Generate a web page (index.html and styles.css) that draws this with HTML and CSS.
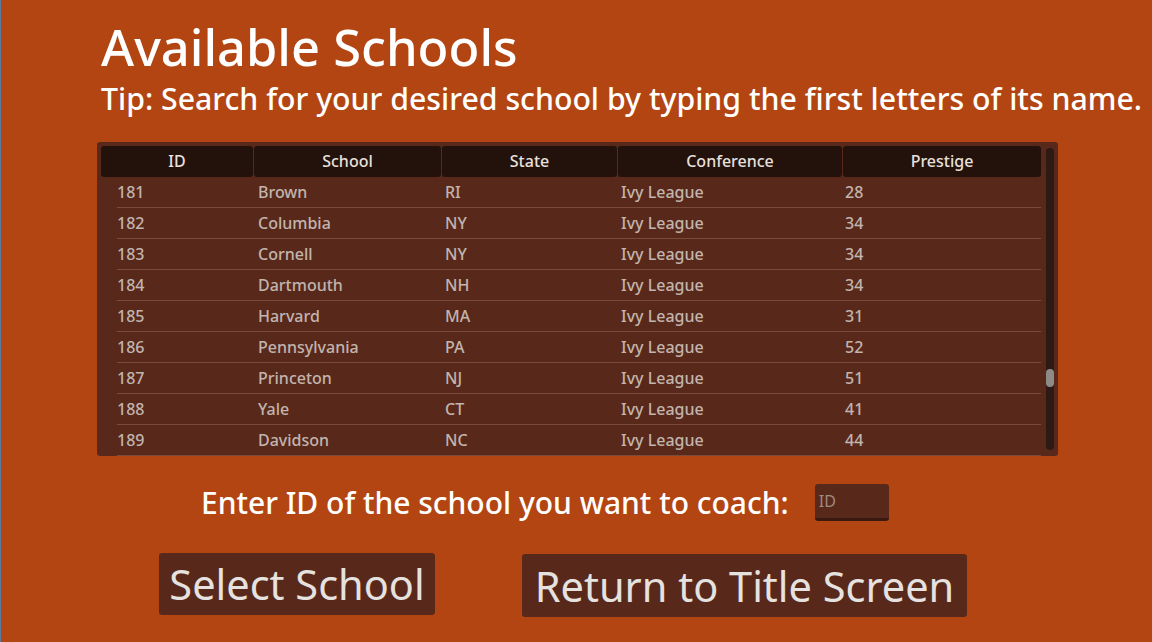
FILE: index.html
```html
<!DOCTYPE html>
<html lang="en">
<head>
    <meta charset="UTF-8">
    <title>Available Schools</title>
    <link rel="stylesheet" href="styles.css">
</head>
<body>
    <div class="screen">
        <h1 class="title">Available Schools</h1>
        <p class="tip">Tip: Search for your desired school by typing the first letters of its name.</p>

        <!-- Schools table -->
        <div class="panel">
            <div class="table">
                <div class="head">
                    <div class="hcell">ID</div>
                    <div class="hcell">School</div>
                    <div class="hcell">State</div>
                    <div class="hcell">Conference</div>
                    <div class="hcell">Prestige</div>
                </div>
                <div class="row"><span>181</span><span>Brown</span><span>RI</span><span>Ivy League</span><span>28</span></div>
                <div class="row"><span>182</span><span>Columbia</span><span>NY</span><span>Ivy League</span><span>34</span></div>
                <div class="row"><span>183</span><span>Cornell</span><span>NY</span><span>Ivy League</span><span>34</span></div>
                <div class="row"><span>184</span><span>Dartmouth</span><span>NH</span><span>Ivy League</span><span>34</span></div>
                <div class="row"><span>185</span><span>Harvard</span><span>MA</span><span>Ivy League</span><span>31</span></div>
                <div class="row"><span>186</span><span>Pennsylvania</span><span>PA</span><span>Ivy League</span><span>52</span></div>
                <div class="row"><span>187</span><span>Princeton</span><span>NJ</span><span>Ivy League</span><span>51</span></div>
                <div class="row"><span>188</span><span>Yale</span><span>CT</span><span>Ivy League</span><span>41</span></div>
                <div class="row"><span>189</span><span>Davidson</span><span>NC</span><span>Ivy League</span><span>44</span></div>
            </div>
            <div class="scrollbar"><div class="thumb"></div></div>
        </div>

        <div class="enter">
            <label class="enter-label" for="school-id">Enter ID of the school you want to coach:</label>
            <input id="school-id" class="id-input" type="text" placeholder="ID">
        </div>

        <div class="buttons">
            <button class="btn btn-select">Select School</button>
            <button class="btn btn-return">Return to Title Screen</button>
        </div>
    </div>
</body>
</html>
```

FILE: styles.css
```css
html, body {
    margin: 0;
    height: 100%;
}

body {
    font-family: 'Noto Sans', 'Open Sans', sans-serif;
    background: #b34512;
    border-left: 1px solid #5b7a9a;
    overflow: hidden;
}

.screen {
    padding-left: 96px;
}

.title {
    margin: 0;
    padding-top: 17px;
    padding-left: 4px;
    font-size: 50.6px;
    font-weight: 500;
    line-height: 60px;
    color: #ffffff;
}

.tip {
    margin: 0;
    padding-left: 4px;
    font-size: 30.25px;
    font-weight: 500;
    line-height: 44px;
    color: #ffffff;
    white-space: nowrap;
}

/* Table */
.panel {
    margin-top: 21px;
    width: 961px;
    height: 314px;
    box-sizing: border-box;
    background: #58291a;
    border-radius: 3px;
    padding: 4px;
    display: flex;
    gap: 5px;
}

.table {
    width: 940px;
}

.head {
    display: grid;
    grid-template-columns: 152px 187px 175px 224px 198px;
    gap: 1px;
    height: 31px;
}

.hcell {
    background: #23110b;
    border-radius: 3px;
    color: #e8e0dc;
    font-size: 16px;
    font-weight: 500;
    line-height: 31px;
    text-align: center;
}

.row {
    display: grid;
    grid-template-columns: 141px 187px 176px 224px 192px;
    margin-left: 16px;
    height: 30px;
    border-bottom: 1px solid #7b4a3a;
    color: #c2b4ae;
    font-size: 16px;
    font-weight: 500;
    line-height: 31px;
}

.scrollbar {
    width: 8px;
    margin-top: 2px;
    height: 302px;
    background: #2e1a14;
    border-radius: 4px;
    position: relative;
}

.thumb {
    position: absolute;
    left: 0;
    top: 221px;
    width: 8px;
    height: 18px;
    border-radius: 4px;
    background: #8e8a88;
}

/* ID entry */
.enter {
    display: flex;
    align-items: center;
    margin-top: 26px;
    margin-left: 104px;
    gap: 26px;
}

.enter-label {
    font-size: 30px;
    font-weight: 500;
    color: #ffffff;
}

.id-input {
    width: 74px;
    height: 37px;
    box-sizing: border-box;
    background: #58291a;
    border: none;
    border-bottom: 3px solid #3a1a10;
    border-radius: 3px;
    color: #c2b4ae;
    font-family: inherit;
    font-size: 16px;
    padding: 0 4px;
}

.id-input::placeholder {
    color: #a08a82;
}

/* Buttons */
.buttons {
    display: flex;
    align-items: flex-start;
    margin-top: 30px;
    margin-left: 62px;
    gap: 87px;
}

.btn {
    background: #58291a;
    border: none;
    border-radius: 3px;
    color: #e6e2e0;
    font-family: inherit;
    font-size: 41.5px;
    height: 62px;
    padding: 0;
    white-space: nowrap;
}

.btn-select {
    width: 276px;
}

.btn-return {
    width: 445px;
    height: 63px;
    margin-top: 1px;
}
```
